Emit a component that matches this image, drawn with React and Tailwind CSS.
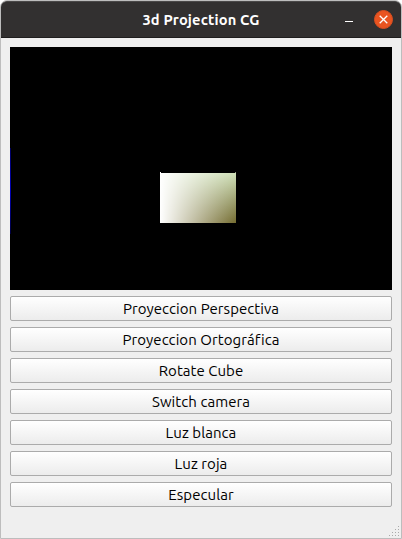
const actions = [
  "Proyeccion Perspectiva",
  "Proyeccion Ortográfica",
  "Rotate Cube",
  "Switch camera",
  "Luz blanca",
  "Luz roja",
  "Especular",
];

function TitleBar() {
  return (
    <header className="grid h-[37px] grid-cols-[1fr_auto_1fr] items-center rounded-t-[6px] border-t border-b border-t-[#4a4848] border-b-[#1f1e1e] bg-[#323030]">
      <h1 className="col-start-2 text-[14.67px] leading-5 font-bold tracking-[0.15px] whitespace-nowrap text-white">3d Projection CG</h1>
      <div className="flex items-center justify-end gap-[20.5px] pr-[8.5px]">
        <button aria-label="Minimize" className="mt-[3px] h-px w-2 bg-white" />
        <button aria-label="Close" className="mb-px flex size-[19px] items-center justify-center rounded-full border border-[#d94e20] bg-[#e95420]">
          <svg viewBox="0 0 9 9" className="size-[9px]" stroke="white" strokeWidth="1.3">
            <path d="M.7.7l7.6 7.6M8.3.7L.7 8.3" />
          </svg>
        </button>
      </div>
    </header>
  );
}

function Viewport() {
  return (
    <div className="flex h-[243px] items-start bg-black">
      <div className="mt-[101px] h-[86px] w-px bg-linear-to-b from-[#000060] via-[#0000b8] to-[#000040]" />
      <div className="mt-[125px] ml-[149px]">
        <div className="flex justify-between">
          <span className="h-px w-px bg-white" />
          <span className="h-px w-px bg-[#8f9680]" />
        </div>
        <div className="h-[50px] w-[76px] bg-linear-to-b from-[#cfe0b8] to-[#746c30]">
          <div className="size-full bg-linear-to-r from-white to-white/0" />
        </div>
      </div>
    </div>
  );
}

function SizeGrip() {
  const rows = [1, 2, 3, 4];
  return (
    <div className="absolute right-[2px] bottom-[2px] flex flex-col items-end gap-[2px]">
      {rows.map((n) => (
        <div key={n} className="flex gap-[2px]">
          {rows.slice(0, n).map((d) => (
            <span key={d} className="size-px bg-[#aaa]" />
          ))}
        </div>
      ))}
    </div>
  );
}

export default function App() {
  return (
    <div className="h-[539px] w-[402px] bg-white font-['Ubuntu','Noto_Sans',sans-serif]">
      <div className="relative h-full rounded-t-[7px] border border-[#bdbdbd] bg-[#efefef]">
        <TitleBar />
        <main className="flex flex-col gap-1.5 px-[9px] pt-[9px]">
          <Viewport />
          {actions.map((label) => (
            <button
              key={label}
              className="flex h-[25px] items-center justify-center rounded-[2px] border border-[#ababab] bg-linear-to-b from-white to-[#ececec] text-[15px] leading-none tracking-[0.06px] whitespace-nowrap text-black"
            >
              {label}
            </button>
          ))}
        </main>
        <SizeGrip />
      </div>
    </div>
  );
}
